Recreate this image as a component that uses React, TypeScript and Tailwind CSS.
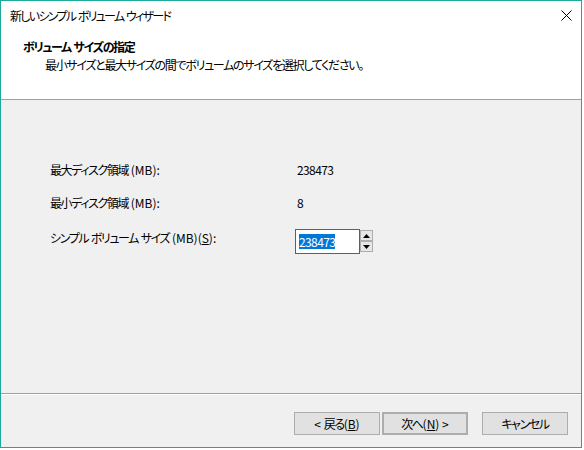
const btn =
  "flex h-[23px] w-[86px] items-center justify-center border border-[#adadad] bg-[#e1e1e1] text-[12px] leading-none text-black";

// Japanese runs are set tighter so they match the narrow system UI font
const J = ({ children }: { children: React.ReactNode }) => (
  <span className="tracking-[-1.4px]">{children}</span>
);

const SpinArrow = ({ up }: { up: boolean }) => (
  <div className="flex h-[11px] w-[13px] items-center justify-center border border-[#adadad] bg-[#e6e6e6]">
    <svg width="7" height="4" viewBox="0 0 7 4">
      {up ? (
        <polygon points="3.5,0 7,4 0,4" fill="#000" />
      ) : (
        <polygon points="0,0 7,0 3.5,4" fill="#000" />
      )}
    </svg>
  </div>
);

export default function App() {
  return (
    <div className="h-[450px] w-[584px] bg-white font-['Noto_Sans_CJK_JP','Noto_Sans',sans-serif] [font-feature-settings:'palt']">
      <div className="flex h-[448px] w-[582px] flex-col border border-[#1aa99b] text-black">
        {/* title bar */}
        <div className="flex h-[30px] items-center justify-between bg-white pl-[9px] pr-[9px]">
          <span className="whitespace-pre text-[12px] leading-none tracking-[-0.3px]">
            <span className="tracking-[-1.7px]">新しいシンプル</span> <span className="tracking-[-1.7px]">ボリューム</span>{" "}
            <span className="tracking-[-1.7px]">ウィザード</span>
          </span>
          <svg width="11" height="11" viewBox="0 0 11 11" className="mb-[1px]">
            <line x1="0.5" y1="0.5" x2="10.5" y2="10.5" stroke="#000" strokeWidth="1" />
            <line x1="10.5" y1="0.5" x2="0.5" y2="10.5" stroke="#000" strokeWidth="1" />
          </svg>
        </div>

        {/* header */}
        <div className="h-[69px] border-b border-[#a0a0a0] bg-white pl-[22px] pt-[8px]">
          <div className="h-[16px] whitespace-pre text-[12px] font-bold leading-[16px]">
            <J>ボリューム</J> <J>サイズの指定</J>
          </div>
          <div className="mt-[2px] h-[16px] pl-[22px] text-[12px] leading-[16px] tracking-[-1.3px]">
            最小サイズと最大サイズの間でボリュームのサイズを選択してください。
          </div>
        </div>

        {/* body */}
        <div className="h-[293px] bg-[#f0f0f0] pl-[49px] pt-[62px] text-[12px]">
          <div className="flex h-[16px] items-center leading-none">
            <span className="w-[247px] whitespace-pre">
              <J>最大ディスク領域</J> (MB):
            </span>
            <span className="tracking-[-0.6px]">238473</span>
          </div>
          <div className="mt-[17px] flex h-[16px] items-center leading-none">
            <span className="w-[247px] whitespace-pre">
              <J>最小ディスク領域</J> (MB):
            </span>
            <span>8</span>
          </div>
          <div className="mt-[18px] flex items-start">
            <span className="mt-[1px] h-[16px] w-[245px] whitespace-pre leading-[16px]">
              <J>シンプル</J> <J>ボリューム</J> <J>サイズ</J> (MB)(<span className="underline">S</span>):
            </span>
            <div className="flex h-[25px] w-[65px] items-center border border-[#0078d7] bg-white pl-[3px]">
              <span className="bg-[#0078d7] leading-[15px] tracking-[-0.6px] text-white">238473</span>
            </div>
            <div className="mt-[1px] flex flex-col">
              <SpinArrow up />
              <SpinArrow up={false} />
            </div>
          </div>
        </div>

        {/* separator */}
        <div className="h-[1px] bg-[#a0a0a0]" />
        <div className="h-[1px] bg-white" />

        {/* footer */}
        <div className="flex h-[52px] justify-end bg-[#f0f0f0] pr-[13px] pt-[17px]">
          <div className={`${btn} whitespace-pre`}>
            &lt; <J>戻る</J>(<span className="underline">B</span>)
          </div>
          <div className={`${btn} ml-[2px] whitespace-pre border-2 border-[#0078d7]`}>
            <J>次へ</J>(<span className="underline">N</span>) &gt;
          </div>
          <div className={`${btn} ml-[14px]`}>
            <J>キャンセル</J>
          </div>
        </div>
      </div>
    </div>
  );
}
